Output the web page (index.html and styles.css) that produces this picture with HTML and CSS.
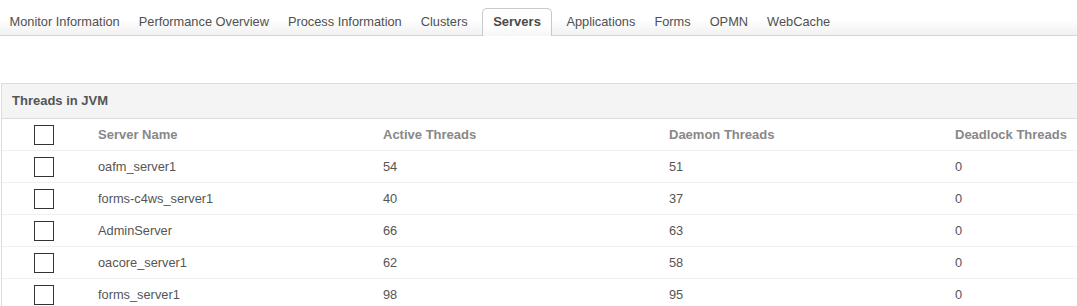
FILE: index.html
```html
<!DOCTYPE html>
<html>
<head>
<meta charset="utf-8">
<title>Servers</title>
<link rel="stylesheet" href="styles.css">
</head>
<body>
<nav class="tabs">
  <a class="tab">Monitor Information</a>
  <a class="tab">Performance Overview</a>
  <a class="tab">Process Information</a>
  <a class="tab">Clusters</a>
  <a class="tab active">Servers</a>
  <a class="tab">Applications</a>
  <a class="tab">Forms</a>
  <a class="tab">OPMN</a>
  <a class="tab">WebCache</a>
</nav>
<section class="panel">
  <header class="panel-title">Threads in JVM</header>
  <div class="grid head">
    <div class="cell chk"><span class="box"></span></div>
    <div class="cell">Server Name</div>
    <div class="cell">Active Threads</div>
    <div class="cell">Daemon Threads</div>
    <div class="cell">Deadlock Threads</div>
  </div>
  <div class="grid row">
    <div class="cell chk"><span class="box"></span></div>
    <div class="cell">oafm_server1</div>
    <div class="cell">54</div>
    <div class="cell">51</div>
    <div class="cell">0</div>
  </div>
  <div class="grid row">
    <div class="cell chk"><span class="box"></span></div>
    <div class="cell">forms-c4ws_server1</div>
    <div class="cell">40</div>
    <div class="cell">37</div>
    <div class="cell">0</div>
  </div>
  <div class="grid row">
    <div class="cell chk"><span class="box"></span></div>
    <div class="cell">AdminServer</div>
    <div class="cell">66</div>
    <div class="cell">63</div>
    <div class="cell">0</div>
  </div>
  <div class="grid row">
    <div class="cell chk"><span class="box"></span></div>
    <div class="cell">oacore_server1</div>
    <div class="cell">62</div>
    <div class="cell">58</div>
    <div class="cell">0</div>
  </div>
  <div class="grid row">
    <div class="cell chk"><span class="box"></span></div>
    <div class="cell">forms_server1</div>
    <div class="cell">98</div>
    <div class="cell">95</div>
    <div class="cell">0</div>
  </div>
</section>
</body>
</html>
```
FILE: styles.css
```css
html, body {
  margin: 0;
  padding: 0;
  overflow: hidden;
  background: #fff;
}
body {
  font-family: "Liberation Sans", Arial, sans-serif;
  font-size: 12.8px;
  color: #555;
}
.tabs {
  display: flex;
  align-items: flex-end;
  height: 35px;
  border-bottom: 1px solid #d6d6d6;
  background: linear-gradient(#ffffff 0%, #ffffff 55%, #f1f1f1 100%);
}
.tab {
  box-sizing: border-box;
  height: 28px;
  margin-bottom: -1px;
  padding: 0 9.5px;
  line-height: 27px;
  color: #505050;
  white-space: nowrap;
}
.tab.active {
  margin: 0 5px -1px 5px;
  padding: 0 10px;
  border: 1px solid #c9c9c9;
  border-bottom: none;
  border-radius: 5px 5px 0 0;
  background: linear-gradient(#ffffff 0%, #ffffff 60%, #f6f6f6 100%);
  font-weight: bold;
  font-size: 13px;
  line-height: 26px;
  color: #4a4a4a;
}
.panel {
  margin: 47px 0 0 1px;
  border: 1px solid #dddddd;
  border-right: none;
  overflow: hidden;
}
.panel-title {
  height: 34px;
  line-height: 34px;
  padding-left: 10px;
  background: #f4f4f4;
  border-bottom: 1px solid #dcdcdc;
  font-weight: bold;
  font-size: 13px;
  color: #555;
}
.grid {
  display: grid;
  grid-template-columns: 86px 285px 286px 286px 286px;
  height: 31px;
  align-items: center;
  border-bottom: 1px solid #f0f0f0;
}
.head {
  font-weight: bold;
  font-size: 13px;
  color: #888;
}
.row {
  color: #555;
}
.cell {
  padding-left: 10px;
  white-space: nowrap;
}
.cell.chk {
  padding-left: 32px;
  display: flex;
  align-items: center;
  height: 31px;
  padding-top: 1px;
  box-sizing: border-box;
}
.box {
  display: block;
  width: 20px;
  height: 20px;
  box-sizing: border-box;
  border: 1px solid #333;
  background: #fff;
}
```
